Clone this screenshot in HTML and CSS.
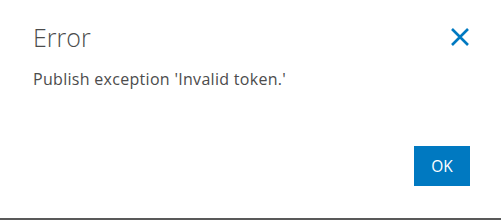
FILE: index.html
```html
<!DOCTYPE html>
<html lang="en">

<head>
    <meta charset="UTF-8" />
    <title>Error</title>
    <link rel="stylesheet" href="styles.css">
</head>

<body>
    <div class="dialog">
        <div class="dialog-header">
            <h2 class="dialog-title">Error</h2>
            <button class="close-btn" aria-label="Close">
                <svg width="20" height="20" viewBox="0 0 20 20">
                    <path d="M2 2 L18 18 M18 2 L2 18" stroke="#0079c1" stroke-width="2.6" fill="none" />
                </svg>
            </button>
        </div>
        <p class="dialog-msg">Publish exception 'Invalid token.'</p>
        <div class="dialog-footer">
            <button class="ok-btn">OK</button>
        </div>
    </div>
</body>

</html>
```

FILE: styles.css
```css
*,
::after,
::before {
    box-sizing: border-box;
    padding: 0;
    margin: 0;
}

body {
    width: 501px;
    height: 222px;
    background-color: white;
    font-family: "Open Sans", Lato, sans-serif;
    color: #4c4c4c;
}

.dialog {
    height: 220px;
    border-bottom: 2px solid #595959;
    padding: 19px 31px 0 33px;
    display: flex;
    flex-direction: column;
}

.dialog-header {
    display: flex;
    align-items: center;
    justify-content: space-between;
}

.dialog-title {
    font-size: 25px;
    font-weight: 300;
    line-height: 36px;
}

.close-btn {
    border: none;
    background: none;
    width: 20px;
    height: 20px;
    display: flex;
}

.dialog-msg {
    margin-top: 14px;
    font-size: 16px;
    line-height: 20px;
    letter-spacing: 0.3px;
}

.dialog-footer {
    display: flex;
    justify-content: flex-end;
    margin-top: 57px;
}

.ok-btn {
    background-color: #0079c1;
    color: white;
    border: none;
    width: 56px;
    height: 40px;
    font-family: "Open Sans", Lato, sans-serif;
    font-size: 15.5px;
}
```
